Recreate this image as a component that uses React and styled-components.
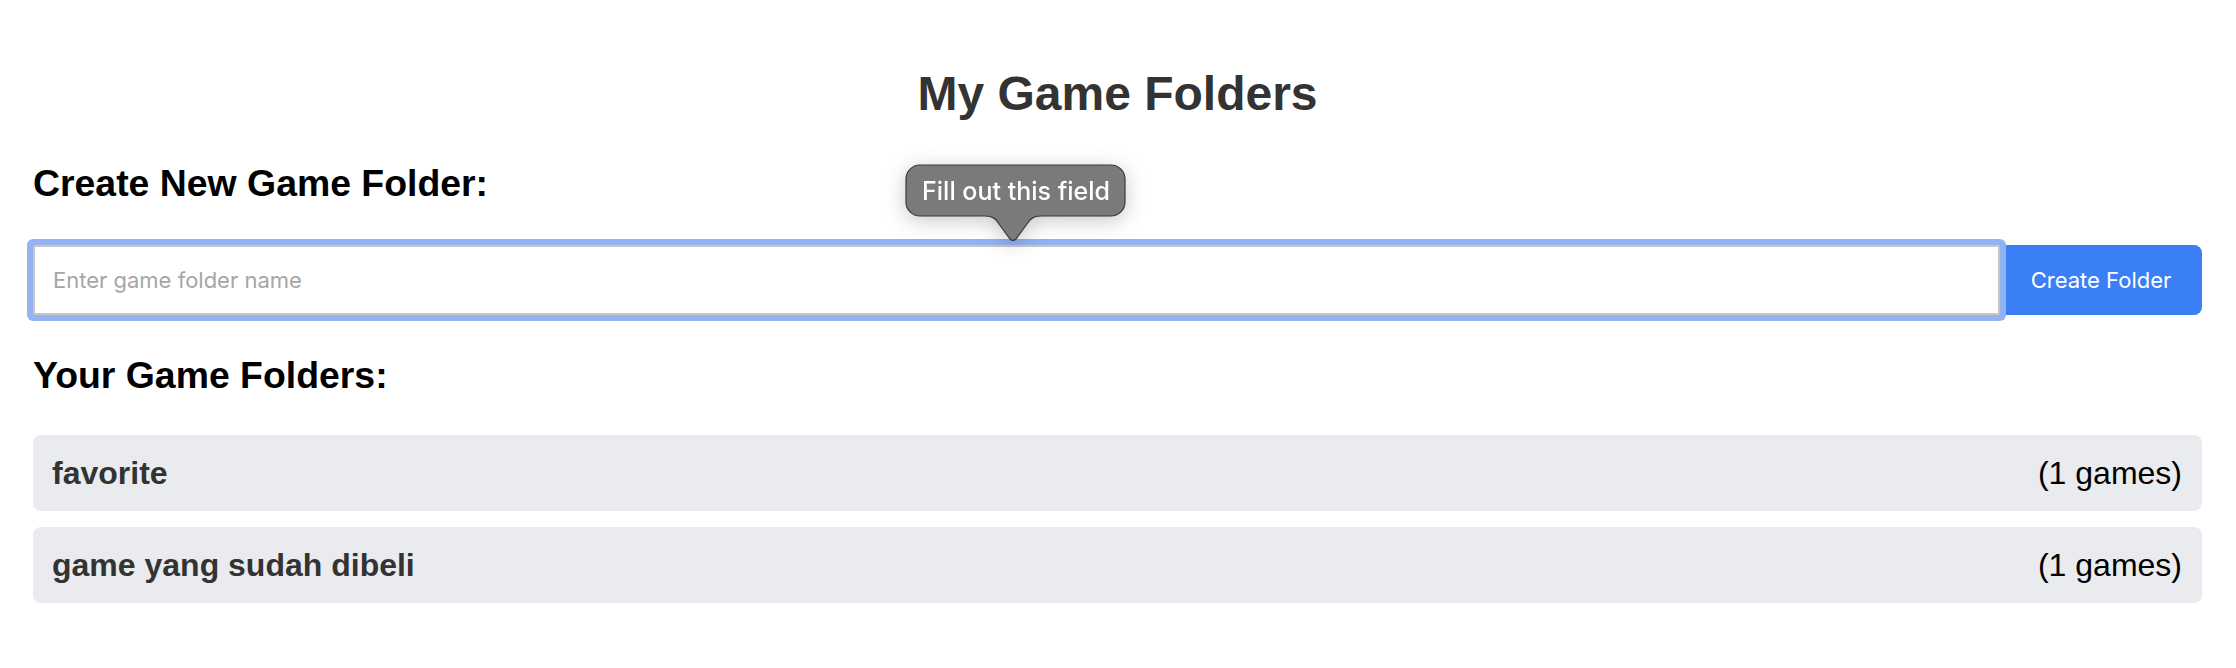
import styled, { createGlobalStyle } from 'styled-components';

const GlobalStyle = createGlobalStyle`
    body {
        margin: 0;
        background: #fff;
        font-family: "Liberation Sans", Arial, sans-serif;
    }
`

const folders = [
    { name: 'favorite', count: 1 },
    { name: 'game yang sudah dibeli', count: 1 },
]

const App = () => {
    return (
        <>
            <GlobalStyle />
            <Page>
                <Title>My Game Folders</Title>

                <SectionTitle $top={41}>Create New Game Folder:</SectionTitle>
                <Form onSubmit={e => e.preventDefault()}>
                    <NameInput type="text" placeholder="Enter game folder name" required autoFocus />
                    <CreateButton type="submit">Create Folder</CreateButton>

                    <Bubble>
                        <svg width="222" height="80" viewBox="0 0 222 80">
                            <path
                                d="M15,1 H206 A14,14 0 0 1 220,15 V38 A14,14 0 0 1 206,52 H136 C128,52 125,55 122,60 L111,75 Q108,78 105,75 L94,60 C91,55 88,52 80,52 H15 A14,14 0 0 1 1,38 V15 A14,14 0 0 1 15,1 Z"
                                fill="#797a7a"
                                stroke="#3a3a3a"
                                strokeWidth="1.2"
                            />
                        </svg>
                        <BubbleText>Fill out this field</BubbleText>
                    </Bubble>
                </Form>

                <SectionTitle $top={39}>Your Game Folders:</SectionTitle>
                <FolderList>
                    {folders.map(folder => (
                        <FolderRow key={folder.name}>
                            <FolderName>{folder.name}</FolderName>
                            <FolderCount>({folder.count} games)</FolderCount>
                        </FolderRow>
                    ))}
                </FolderList>
            </Page>
        </>
    )
}

export default App;


const Page = styled.div`
    padding: 0 34px 60px 33px;
`

const Title = styled.h1`
    margin: 66px 0 0;
    text-align: center;
    font-size: 48px;
    font-weight: bold;
    color: #333;
`

const SectionTitle = styled.h3`
    margin: ${p => p.$top}px 0 0;
    font-size: 37.4px;
    font-weight: bold;
    color: #000;
`

const Form = styled.form`
    position: relative;
    display: flex;
    margin-top: 40px;
    height: 70px;
`

const NameInput = styled.input`
    position: relative;
    z-index: 1;
    flex: 1;
    box-sizing: border-box;
    height: 70px;
    margin: 0;
    padding: 0 18px;
    border: 2px solid #c6c6c6;
    border-radius: 2px;
    box-shadow: 0 0 0 6px #93b2f2;
    outline: none;
    font-family: Inter, "Noto Sans", sans-serif;
    font-size: 22px;
    color: #222;
    caret-color: #7f9fe0;

    &::placeholder {
        color: #a6a6a6;
    }
`

const CreateButton = styled.button`
    width: 202px;
    height: 70px;
    margin: 0;
    border: none;
    border-radius: 0 8px 8px 0;
    background: #3b7ff6;
    color: #fff;
    font-family: Inter, "Noto Sans", sans-serif;
    font-size: 22px;
    cursor: pointer;
`

const Bubble = styled.div`
    position: absolute;
    z-index: 2;
    left: 872px;
    top: -81px;
    width: 222px;
    height: 80px;
    filter: drop-shadow(0 4px 10px rgba(0, 0, 0, 0.22));

    svg {
        position: absolute;
        inset: 0;
    }
`

const BubbleText = styled.span`
    position: relative;
    display: flex;
    align-items: center;
    justify-content: center;
    height: 53px;
    font-family: Inter, "Noto Sans", sans-serif;
    font-size: 25px;
    font-weight: 500;
    color: #fff;
`

const FolderList = styled.div`
    display: flex;
    flex-direction: column;
    gap: 16px;
    margin-top: 38px;
`

const FolderRow = styled.div`
    display: flex;
    align-items: center;
    justify-content: space-between;
    height: 76px;
    padding: 0 20px 0 19px;
    border-radius: 8px;
    background: #eaebef;
`

const FolderName = styled.span`
    font-size: 32px;
    font-weight: bold;
    color: #333;
`

const FolderCount = styled.span`
    font-size: 32px;
    color: #000;
`
